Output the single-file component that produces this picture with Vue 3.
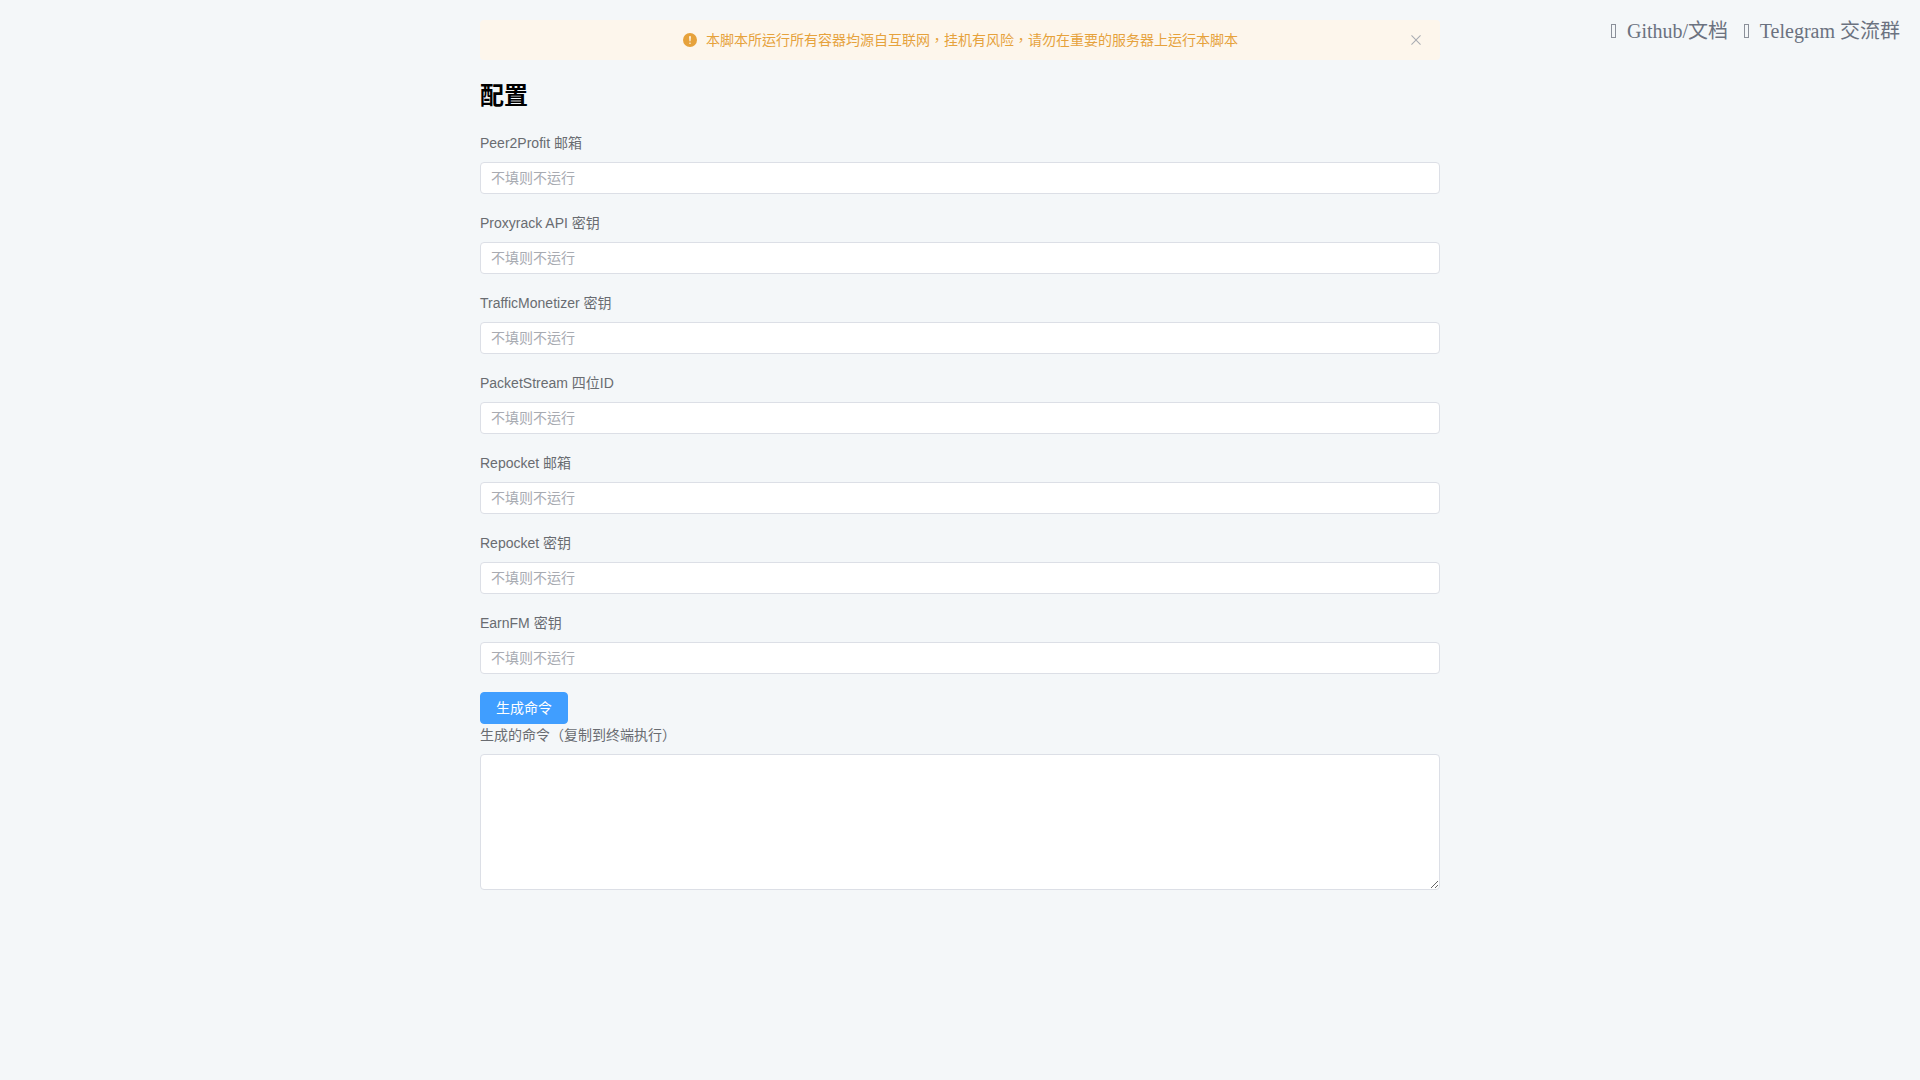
<template>
  <div class="page">
    <main class="main">
      <div class="alert">
        <div class="alert-msg">
          <svg class="alert-icon" viewBox="0 0 1024 1024">
            <path fill="currentColor" d="M512 64a448 448 0 1 1 0 896 448 448 0 0 1 0-896zm0 192a58.432 58.432 0 0 0-58.24 63.744l23.36 256.384a35.072 35.072 0 0 0 69.76 0l23.296-256.384A58.432 58.432 0 0 0 512 256zm0 512a51.2 51.2 0 1 0 0-102.4 51.2 51.2 0 0 0 0 102.4z" />
          </svg>
          <span class="alert-text">本脚本所运行所有容器均源自互联网，挂机有风险，请勿在重要的服务器上运行本脚本</span>
        </div>
        <svg class="alert-close" viewBox="0 0 1024 1024">
          <path fill="currentColor" d="M764.288 214.592 512 466.88 259.712 214.592a31.936 31.936 0 0 0-45.12 45.12L466.752 512 214.528 764.224a31.936 31.936 0 1 0 45.12 45.184L512 557.184l252.288 252.288a31.936 31.936 0 0 0 45.12-45.12L557.12 512.064l252.288-252.352a31.936 31.936 0 1 0-45.12-45.184z" />
        </svg>
      </div>

      <h2 class="title">配置</h2>

      <form class="form" @submit.prevent>
        <div v-for="f in fields" :key="f" class="item">
          <label class="label">{{ f }}</label>
          <input class="input" type="text" placeholder="不填则不运行" />
        </div>
        <button class="btn" type="button">生成命令</button>
        <label class="label">生成的命令（复制到终端执行）</label>
        <textarea class="output" rows="6"></textarea>
      </form>
    </main>

    <nav class="links">
      <a class="link"><span class="tofu"></span> Github/文档</a>
      <a class="link"><span class="tofu"></span> Telegram 交流群</a>
    </nav>
  </div>
</template>

<script setup>
const fields = [
  'Peer2Profit 邮箱',
  'Proxyrack API 密钥',
  'TrafficMonetizer 密钥',
  'PacketStream 四位ID',
  'Repocket 邮箱',
  'Repocket 密钥',
  'EarnFM 密钥',
]
</script>

<style>
html, body {
  background: #f4f7f9;
}
</style>

<style scoped>
.page {
  display: grid;
  grid-template-columns: 1fr 960px 1fr;
  min-height: 1080px;
  box-sizing: border-box;
  padding-top: 20px;
  font-family: "Liberation Sans", "Noto Sans CJK TC", sans-serif;
}
.main {
  grid-column: 2;
}
.alert {
  position: relative;
  height: 40px;
  box-sizing: border-box;
  padding: 0 16px;
  display: flex;
  align-items: center;
  background: #fdf6ec;
  color: #e6a23c;
  border-radius: 4px;
  font-size: 14px;
}
.alert-msg {
  flex: 1;
  display: flex;
  justify-content: center;
  align-items: center;
  gap: 8px;
}
.alert-icon {
  width: 16px;
  height: 16px;
}
.alert-text {
  padding-bottom: 2px;
}
.alert-close {
  position: absolute;
  top: 12px;
  right: 16px;
  width: 16px;
  height: 16px;
  color: #a8abb2;
}
.title {
  margin: 20px 0;
  font-size: 24px;
  line-height: 32px;
  font-weight: 700;
  color: #000;
}
.form {
  display: flex;
  flex-direction: column;
  align-items: flex-start;
}
.item {
  width: 100%;
  margin-bottom: 18px;
}
.label {
  display: block;
  font-size: 14px;
  line-height: 22px;
  color: #696c71;
}
.item .label {
  margin-bottom: 8px;
}
.input {
  display: block;
  width: 100%;
  height: 32px;
  box-sizing: border-box;
  padding: 0 10px;
  border: 1px solid #dcdfe6;
  border-radius: 4px;
  background: #fff;
  font: inherit;
  font-size: 14px;
  color: #606266;
  outline: none;
}
.input::placeholder {
  color: #a8abb2;
}
.btn {
  width: 88px;
  height: 32px;
  padding: 0 0 2px;
  border: 1px solid #409eff;
  border-radius: 4px;
  background: #409eff;
  color: #fff;
  font: inherit;
  font-size: 14px;
}
.output {
  display: block;
  width: 100%;
  height: 136px;
  margin-top: 8px;
  box-sizing: border-box;
  padding: 5px 11px;
  border: 1px solid #dcdfe6;
  border-radius: 4px;
  background: #fff;
  font: inherit;
  font-size: 14px;
  line-height: 1.5;
  outline: none;
}
.links {
  grid-column: 3;
  display: flex;
  justify-content: flex-end;
  align-items: flex-start;
  gap: 16px;
  padding-right: 20px;
  font-family: "Liberation Serif", "Noto Sans CJK TC", serif;
  font-size: 20px;
  line-height: 23px;
  color: #6b7280;
}
.link {
  white-space: pre;
}
.tofu {
  display: inline-block;
  width: 5px;
  height: 14px;
  box-sizing: border-box;
  margin-right: 6px;
  border: 1px solid #8b909a;
  vertical-align: 0;
}
</style>
